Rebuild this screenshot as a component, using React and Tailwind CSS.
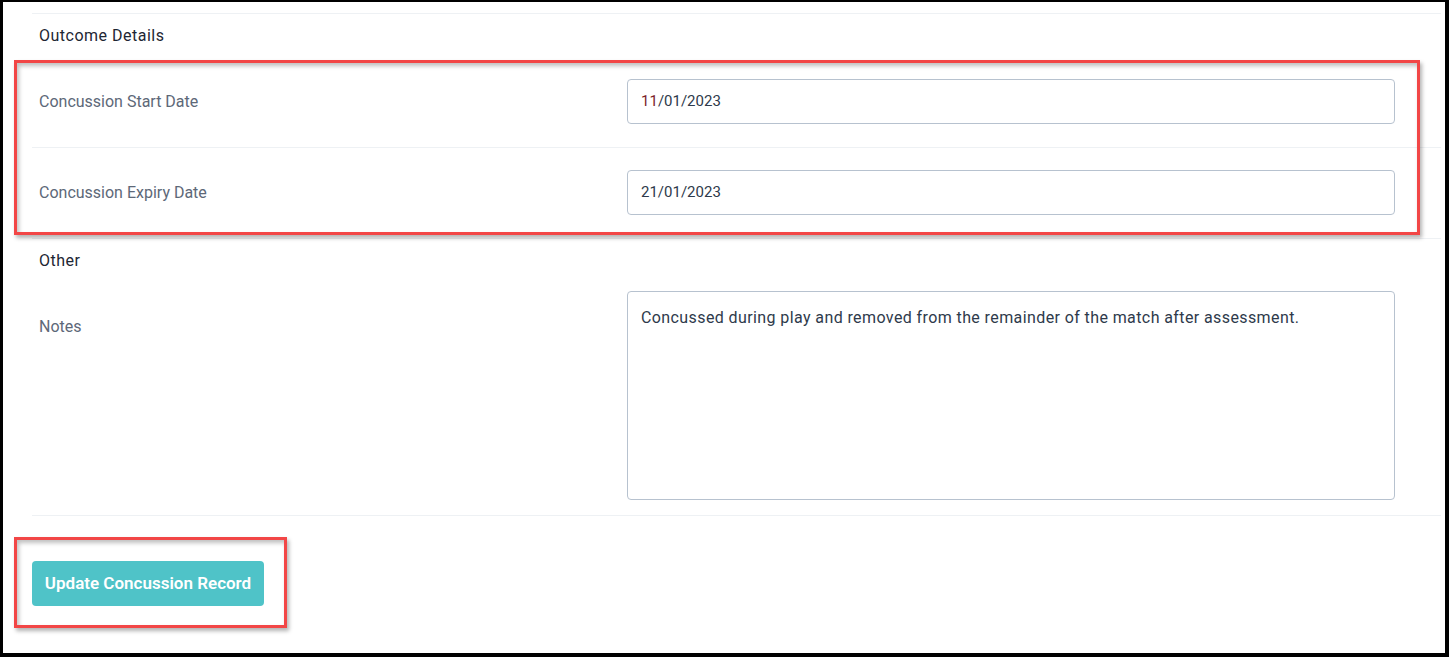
import React from "react";

function SectionHeading({ children, className }) {
  return (
    <div className={"pl-[7px] text-[16px] leading-[20px] tracking-[0.5px] text-[#1d2633] " + className}>
      {children}
    </div>
  );
}

function DateRow({ label, value }) {
  return (
    <div className="flex items-center border-b border-[#eef1f4] pt-[22px] pb-[23px]">
      <div className="w-[595px] pl-[7px] text-[16px] text-[#5d6878]">{label}</div>
      <div className="w-[768px] h-[45px] flex items-center rounded-[4px] border border-[#b7c2cf] px-[13px] text-[15px] text-[#2e3a4b]">
        {value}
      </div>
    </div>
  );
}

export default function App() {
  return (
    <div className="bg-black pt-[2px] pb-[4px] pl-[3px] pr-[4px]" style={{ fontFamily: "Roboto, 'Liberation Sans', sans-serif" }}>
      <div className="relative bg-white h-[651px] pl-[29px] pr-[4px] pt-[11px]">
        <div className="border-t border-[#eef1f4]" />
        <SectionHeading className="pt-[12px] pb-[11px]">Outcome Details</SectionHeading>

        <DateRow
          label="Concussion Start Date"
          value={<span><span className="text-[#7c1f2c]">11</span>/01/2023</span>}
        />
        <DateRow label="Concussion Expiry Date" value="21/01/2023" />

        <SectionHeading className="pt-[12px] pb-[20px]">Other</SectionHeading>

        <div className="flex items-start border-b border-[#eef1f4] pb-[15px]">
          <div className="w-[595px] pl-[7px] pt-[26px] text-[16px] leading-[20px] text-[#5d6878]">Notes</div>
          <div className="w-[768px] h-[209px] rounded-[4px] border border-[#b7c2cf] px-[13px] pt-[16px] text-[16px] leading-[20px] tracking-[0.4px] text-[#2e3a4b]">
            Concussed during play and removed from the remainder of the match after assessment.
          </div>
        </div>

        <div className="pt-[45px]">
          <button className="w-[232px] h-[45px] rounded-[4px] bg-[#4fc3c8] text-white text-[17px] font-semibold">
            Update Concussion Record
          </button>
        </div>

        <div className="absolute left-[11px] top-[58px] w-[1406px] h-[175px] border-[3px] border-[#f24646] shadow-[2px_3px_4px_rgba(0,0,0,0.3),inset_2px_3px_4px_rgba(0,0,0,0.25)] pointer-events-none" />
        <div className="absolute left-[11px] top-[535px] w-[273px] h-[91px] border-[3px] border-[#f24646] shadow-[2px_3px_4px_rgba(0,0,0,0.3),inset_2px_3px_4px_rgba(0,0,0,0.25)] pointer-events-none" />
      </div>
    </div>
  );
}
